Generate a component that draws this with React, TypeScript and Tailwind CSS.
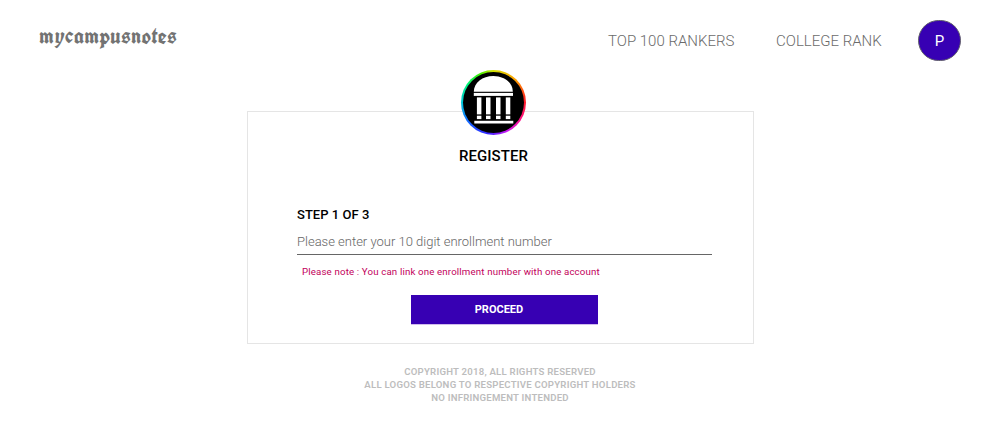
function Header() {
  return (
    <header className="flex h-[70px] items-start pl-[39px] pr-[39px] text-[#6b6b6b]">
      <a className="mt-[24px] h-[26px] font-['Old_English_Text_MT','UnifrakturCook','Liberation_Serif',serif] text-[22.5px] leading-[24px] font-bold tracking-[0.25px] text-[#737373]">
        mycampusnotes
      </a>
      <nav className="ml-auto flex items-start text-[15px] leading-[20px] font-light whitespace-nowrap">
        <a className="mt-[31px] w-[168px]">TOP 100 RANKERS</a>
        <a className="mt-[31px] w-[142px]">COLLEGE RANK</a>
        <div className="mt-[20px] flex h-[41px] w-[43px] items-center justify-center rounded-full border border-[#62606c] bg-[#3700b3] font-normal text-white">
          P
        </div>
      </nav>
    </header>
  );
}

function Emblem() {
  return (
    <div className="h-[65px] w-[65px] rounded-full bg-[conic-gradient(#d4e000,#ff9d00_45deg,#ff2020_85deg,#ff1080_120deg,#cb18f4_155deg,#3626ff_190deg,#126bff_235deg,#00c9dc_270deg,#00f47c_305deg,#43ee00_335deg,#d4e000)] p-[2px]">
      <svg viewBox="0.5 0.5 61 61" className="block h-[61px] w-[61px] rounded-full bg-black" fill="white">
        <path d="M11.3 20.2C11.3 11 20 4.4 30.8 4.4S50.3 11 50.3 20.2Z" />
        <rect x="11.3" y="21.4" width="39.2" height="3" />
        {[14.4, 23.5, 33.5, 43.3].map((x) => (
          <g key={x}>
            <rect x={x} y="25.9" width="4.5" height="17" />
            <rect x={x} y="44.2" width="4.5" height="3.4" />
          </g>
        ))}
        <rect x="11.8" y="49.3" width="39" height="2.7" />
      </svg>
    </div>
  );
}

export default function App() {
  return (
    <div className="min-h-[442px] bg-white font-[Roboto,sans-serif]">
      <Header />
      <main className="mx-auto mt-[41px] flex h-[233px] w-[507px] flex-col border border-[#e5e5e5]">
        <div className="-mt-[42px] ml-[213px] w-[65px]">
          <Emblem />
        </div>
        <h1 className="mt-[11px] ml-[211.5px] text-[15px] leading-[20px] font-medium tracking-[0.05px] text-black">REGISTER</h1>
        <form className="mt-[39px] ml-[49px] w-[415px]">
          <label htmlFor="enrollment" className="block pl-[0.5px] text-[13px] leading-[20px] font-medium tracking-[0.04px] text-black">
            STEP 1 OF 3
          </label>
          <input
            id="enrollment"
            className="mt-[4px] block h-[26px] w-full border-b border-[#666] pl-[0.5px] text-[13px] font-light outline-none placeholder:text-[#666]"
            placeholder="Please enter your 10 digit enrollment number"
          />
          <p className="mt-[9px] ml-[5.5px] text-[9.7px] leading-[16px] tracking-[0.15px] text-[#c2005b]">
            Please note : You can link one enrollment number with one account
          </p>
          <button
            type="button"
            className="mt-[15px] ml-[114px] block h-[30px] w-[187px] border-b border-[#d0bcec] bg-[#3700b3] pr-[10px] text-[11px] leading-[29px] font-bold text-white"
          >
            PROCEED
          </button>
        </form>
      </main>
      <footer className="mt-[21px] text-center text-[9.6px] leading-[13px] font-semibold tracking-[0.23px] text-[#bdbdbd]">
        <p>COPYRIGHT 2018, ALL RIGHTS RESERVED</p>
        <p>ALL LOGOS BELONG TO RESPECTIVE COPYRIGHT HOLDERS</p>
        <p>NO INFRINGEMENT INTENDED</p>
      </footer>
    </div>
  );
}
